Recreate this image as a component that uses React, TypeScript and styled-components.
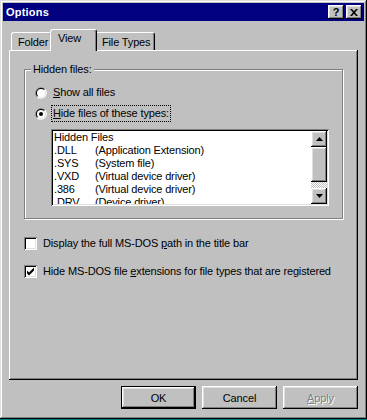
import styled, { createGlobalStyle } from 'styled-components'

const GlobalStyle = createGlobalStyle`
  html, body {
    margin: 0;
    padding: 0;
    background: #008080;
  }
  body {
    font-family: "Liberation Sans", Arial, sans-serif;
    font-size: 11px;
    letter-spacing: -0.15px;
    color: #000;
  }
`

const raised = `
  box-shadow: inset -1px -1px #000, inset 1px 1px #fff,
    inset -2px -2px #808080, inset 2px 2px #dfdfdf;
`

const sunken = `
  box-shadow: inset 1px 1px #808080, inset -1px -1px #fff,
    inset 2px 2px #000, inset -2px -2px #dfdfdf;
`

const Window = styled.div`
  box-sizing: border-box;
  width: 367px;
  height: 419px;
  padding: 3px;
  background: #c0c0c0;
  display: flex;
  flex-direction: column;
  box-shadow: inset -1px -1px #000, inset 1px 1px #dfdfdf,
    inset -2px -2px #808080, inset 2px 2px #fff;
`

const TitleBar = styled.div`
  height: 18px;
  background: #000080;
  display: flex;
  align-items: center;
  justify-content: space-between;
  padding: 0 2px 0 3px;
`

const Title = styled.span`
  color: #fff;
  font-weight: bold;
  font-size: 11px;
  letter-spacing: 0.2px;
`

const Controls = styled.div`
  display: flex;
  gap: 2px;
`

const CaptionButton = styled.div`
  width: 16px;
  height: 14px;
  background: #c0c0c0;
  display: flex;
  align-items: center;
  justify-content: center;
  font-weight: bold;
  font-size: 11px;
  line-height: 14px;
  ${raised}
`

const Body = styled.div`
  flex: 1;
  display: flex;
  flex-direction: column;
  padding: 0 6px;
`

const TabRow = styled.div`
  margin-top: 8px;
  height: 21px;
  display: flex;
  align-items: flex-end;
  padding-left: 2px;
  position: relative;
  z-index: 1;
`

const Tab = styled.div<{ $active?: boolean; $w: number }>`
  box-sizing: border-box;
  width: ${p => p.$w}px;
  height: ${p => (p.$active ? 22 : 18)}px;
  margin: ${p => (p.$active ? '0 -2px -1px -2px' : '0')};
  padding: ${p => (p.$active ? '2px 0 0 7px' : '3px 0 0 6px')};
  background: #c0c0c0;
  border-top: 1px solid #fff;
  border-left: 1px solid #fff;
  border-right: 1px solid #000;
  border-radius: 3px 3px 0 0;
  box-shadow: inset -1px 0 #808080;
  z-index: ${p => (p.$active ? 2 : 1)};
  font-size: 11px;
  line-height: 13px;
  white-space: nowrap;
`

const Panel = styled.div`
  box-sizing: border-box;
  height: 330px;
  padding: 19px 15px 0 15px;
  background: #c0c0c0;
  box-shadow: inset -1px -1px #000, inset 1px 1px #fff,
    inset -2px -2px #808080;
  display: flex;
  flex-direction: column;
`

const GroupBox = styled.div`
  position: relative;
  box-sizing: border-box;
  height: 150px;
  border: 1px solid #808080;
  box-shadow: inset 1px 1px #fff, 1px 1px #fff;
  padding: 14px 0 0 10px;
  display: flex;
  flex-direction: column;
`

const Caption = styled.span`
  position: absolute;
  top: -7px;
  left: 6px;
  padding: 0 2px;
  background: #c0c0c0;
  line-height: 13px;
`

const OptionRow = styled.div<{ $gap?: number }>`
  display: flex;
  align-items: center;
  height: 17px;
  gap: ${p => p.$gap ?? 4}px;
  margin-bottom: 4px;
`

const Label = styled.span<{ $focus?: boolean }>`
  box-sizing: border-box;
  height: 17px;
  line-height: 15px;
  padding: 0 1px;
  border: 1px ${p => (p.$focus ? 'dotted #000' : 'solid transparent')};
  white-space: nowrap;
`

const Key = styled.span`
  text-decoration: underline;
`

const ListBox = styled.div`
  box-sizing: border-box;
  margin: 3px 0 0 16px;
  width: 278px;
  height: 77px;
  padding: 2px;
  background: #fff;
  display: flex;
  ${sunken}
`

const ListItems = styled.div`
  flex: 1;
  overflow: hidden;
  padding-left: 1px;
`

const ListRow = styled.div`
  display: flex;
  height: 13px;
  line-height: 13px;
  white-space: nowrap;
`

const Ext = styled.span`
  width: 41px;
`

const ScrollBar = styled.div`
  width: 16px;
  display: flex;
  flex-direction: column;
`

const ScrollButton = styled.div<{ $h: number }>`
  height: ${p => p.$h}px;
  background: #c0c0c0;
  display: flex;
  align-items: center;
  justify-content: center;
  ${raised}
`

const Track = styled.div`
  flex: 1;
  background-color: #fff;
  background-image: conic-gradient(#c0c0c0 25%, #fff 0 50%, #c0c0c0 0 75%, #fff 0);
  background-size: 2px 2px;
`

const CheckArea = styled.div`
  margin-top: 16px;
  display: flex;
  flex-direction: column;
  gap: 7px;
`

const CheckBox = styled.div`
  width: 13px;
  height: 13px;
  background: #fff;
  flex-shrink: 0;
  ${sunken}
  display: flex;
  align-items: center;
  justify-content: center;
`

const ButtonRow = styled.div`
  margin-top: 6px;
  display: flex;
  justify-content: flex-end;
  gap: 6px;
`

const Button = styled.div<{ $default?: boolean; $disabled?: boolean }>`
  box-sizing: border-box;
  width: 75px;
  height: 23px;
  display: flex;
  align-items: center;
  justify-content: center;
  background: #c0c0c0;
  color: ${p => (p.$disabled ? '#808080' : '#000')};
  text-shadow: ${p => (p.$disabled ? '1px 1px #fff' : 'none')};
  ${p =>
    p.$default
      ? `border: 1px solid #000;
         box-shadow: inset -1px -1px #000, inset 1px 1px #fff,
           inset -2px -2px #808080, inset 2px 2px #dfdfdf;`
      : raised}
`

const Radio = ({ checked }: { checked?: boolean }) => (
  <svg width="12" height="12" viewBox="0 0 12 12" style={{ flexShrink: 0 }}>
    <path d="M10.24 1.76 A6 6 0 0 0 1.76 10.24" fill="#808080" />
    <path d="M1.76 10.24 A6 6 0 0 0 10.24 1.76" fill="#fff" />
    <path d="M9.54 2.46 A5 5 0 0 0 2.46 9.54" fill="#000" />
    <path d="M2.46 9.54 A5 5 0 0 0 9.54 2.46" fill="#dfdfdf" />
    <circle cx="6" cy="6" r="4" fill="#fff" />
    {checked && <circle cx="6" cy="6" r="2" fill="#000" />}
  </svg>
)

const Arrow = ({ up }: { up?: boolean }) => (
  <svg width="7" height="4" viewBox="0 0 7 4">
    <polygon points={up ? '3.5,0 7,4 0,4' : '0,0 7,0 3.5,4'} fill="#000" />
  </svg>
)

const Check = () => (
  <svg width="9" height="9" viewBox="0 0 9 9">
    <path d="M1 3 L3 5 L8 0 L8 3 L3 8 L1 6 Z" fill="#000" transform="translate(0 0.5)" />
  </svg>
)

const hiddenTypes = [
  ['.DLL', '(Application Extension)'],
  ['.SYS', '(System file)'],
  ['.VXD', '(Virtual device driver)'],
  ['.386', '(Virtual device driver)'],
  ['.DRV', '(Device driver)'],
]

export default function App() {
  return (
    <>
      <GlobalStyle />
      <Window>
        <TitleBar>
          <Title>Options</Title>
          <Controls>
            <CaptionButton>?</CaptionButton>
            <CaptionButton>
              <svg width="8" height="7" viewBox="0 0 8 7">
                <path d="M0 0 L2 0 L4 2.2 L6 0 L8 0 L5 3.5 L8 7 L6 7 L4 4.8 L2 7 L0 7 L3 3.5 Z" fill="#000" />
              </svg>
            </CaptionButton>
          </Controls>
        </TitleBar>
        <Body>
          <TabRow>
            <Tab $w={41}>Folder</Tab>
            <Tab $w={47} $active>View</Tab>
            <Tab $w={60}>File Types</Tab>
          </TabRow>
          <Panel>
            <GroupBox>
              <Caption>Hidden files:</Caption>
              <OptionRow>
                <Radio />
                <Label><Key>S</Key>how all files</Label>
              </OptionRow>
              <OptionRow>
                <Radio checked />
                <Label $focus><Key>H</Key>ide files of these types:</Label>
              </OptionRow>
              <ListBox>
                <ListItems>
                  <ListRow>Hidden Files</ListRow>
                  {hiddenTypes.map(([ext, desc]) => (
                    <ListRow key={ext}>
                      <Ext>{ext}</Ext>
                      <span>{desc}</span>
                    </ListRow>
                  ))}
                </ListItems>
                <ScrollBar>
                  <ScrollButton $h={16}><Arrow up /></ScrollButton>
                  <ScrollButton $h={35} />
                  <Track />
                  <ScrollButton $h={16}><Arrow /></ScrollButton>
                </ScrollBar>
              </ListBox>
            </GroupBox>
            <CheckArea>
              <OptionRow $gap={4}>
                <CheckBox />
                <Label>Display the full MS-DOS <Key>p</Key>ath in the title bar</Label>
              </OptionRow>
              <OptionRow $gap={4}>
                <CheckBox><Check /></CheckBox>
                <Label>Hide MS-DOS file <Key>e</Key>xtensions for file types that are registered</Label>
              </OptionRow>
            </CheckArea>
          </Panel>
          <ButtonRow>
            <Button $default>OK</Button>
            <Button>Cancel</Button>
            <Button $disabled><Key>A</Key>pply</Button>
          </ButtonRow>
        </Body>
      </Window>
    </>
  )
}
